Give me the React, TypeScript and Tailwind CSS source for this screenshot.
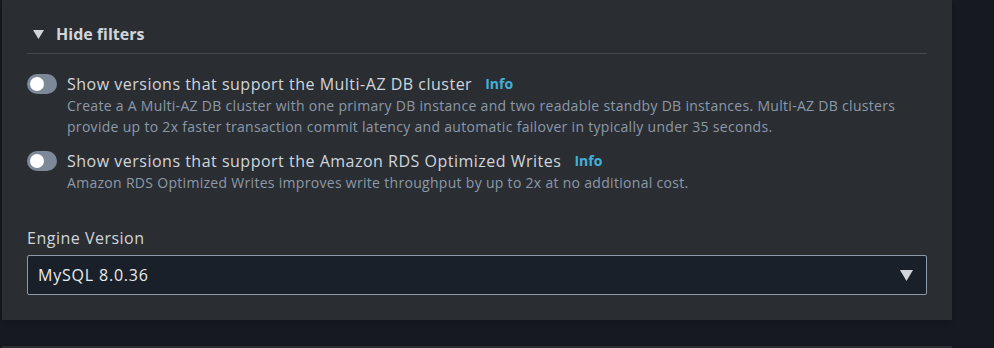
const font = { fontFamily: '"Open Sans", "Noto Sans", sans-serif' }

function Toggle() {
  return (
    <div className="mt-[1px] flex h-[20px] w-[30px] shrink-0 items-center rounded-full bg-[#7d8998] px-[3px]">
      <div className="size-[14px] rounded-full bg-white" />
    </div>
  )
}

function FilterRow({ label, desc }: { label: string; desc: string[] }) {
  return (
    <div className="flex gap-[10px]">
      <Toggle />
      <div className="flex flex-col">
        <div className="flex items-center gap-[13px] text-[16px] leading-[22px] text-[#d1d5db]">
          <span className="tracking-[0.5px]">{label}</span>
          <span className="text-[14px] font-bold text-[#42b0d8]">Info</span>
        </div>
        <div className="text-[14px] leading-[21px] tracking-[0.3px] text-[#8d99a8]">
          {desc.map((d) => (
            <div key={d}>{d}</div>
          ))}
        </div>
      </div>
    </div>
  )
}

export default function App() {
  return (
    <div className="flex h-[348px] w-full flex-col bg-[#16191f]" style={font}>
      <section className="ml-[2px] flex h-[320px] w-[950px] flex-col bg-[#2a2e33] px-[25px] pt-[22px] shadow-md">
        <div className="flex items-center gap-[12px] pl-[6px] text-[16px] font-bold leading-[24px] text-[#d1d5db]">
          <svg width="11" height="9" viewBox="0 0 11 9">
            <path d="M0 0h11L5.5 9z" fill="#d1d5db" />
          </svg>
          Hide filters
        </div>
        <div className="mt-[7px] h-px w-full bg-[#414750]" />

        <div className="mt-[19px] flex flex-col gap-[13px]">
          <FilterRow
            label="Show versions that support the Multi-AZ DB cluster"
            desc={[
              "Create a A Multi-AZ DB cluster with one primary DB instance and two readable standby DB instances. Multi-AZ DB clusters",
              "provide up to 2x faster transaction commit latency and automatic failover in typically under 35 seconds.",
            ]}
          />
          <FilterRow
            label="Show versions that support the Amazon RDS Optimized Writes"
            desc={["Amazon RDS Optimized Writes improves write throughput by up to 2x at no additional cost."]}
          />
        </div>

        <div className="mt-[33px] text-[16px] leading-[24px] tracking-[0.5px] text-[#d1d5db]">Engine Version</div>
        <div className="mt-[5px] flex h-[40px] items-center justify-between rounded-[2px] border border-[#8d99a8] bg-[#1a2029] pl-[10px] pr-[13px] text-[16px] text-[#e9ebed]">
          <span className="tracking-[0.8px]">MySQL 8.0.36</span>
          <svg width="13" height="11" viewBox="0 0 13 11">
            <path d="M0 0h13L6.5 11z" fill="#d1d5db" />
          </svg>
        </div>
      </section>
      <div className="mt-[26px] ml-[2px] h-[2px] w-[950px] bg-[#2a2e33]" />
    </div>
  )
}
